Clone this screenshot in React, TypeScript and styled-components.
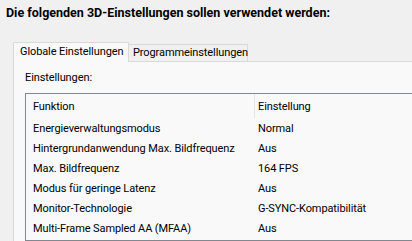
import React from "react";
import styled, { createGlobalStyle } from "styled-components";

const Global = createGlobalStyle`
  html, body { margin: 0; padding: 0; }
  body {
    background: #f0f0f0;
    font-family: Roboto, "Liberation Sans", sans-serif;
    font-size: 11px;
    letter-spacing: -0.1px;
    color: #000;
  }
`;

const Page = styled.div`
  width: 412px;
  height: 241px;
  overflow: hidden;
  background: #f0f0f0;
  display: flex;
  flex-direction: column;
`;

const Title = styled.div`
  padding: 5px 0 0 6px;
  font-weight: 700;
  font-size: 12.5px;
  letter-spacing: 0;
  line-height: 16px;
  white-space: nowrap;
`;

const TabArea = styled.div`
  margin: 21px 0 0 13px;
  display: flex;
  flex-direction: column;
  flex: 1;
  min-height: 0;
`;

const TabStrip = styled.div`
  display: flex;
  align-items: flex-end;
  height: 19px;
`;

const Tab = styled.div<{ $active?: boolean }>`
  box-sizing: border-box;
  position: relative;
  z-index: ${(p) => (p.$active ? 1 : 0)};
  height: ${(p) => (p.$active ? "20px" : "17px")};
  margin-bottom: ${(p) => (p.$active ? "-1px" : "0")};
  width: ${(p) => (p.$active ? "116px" : "119px")};
  padding-left: ${(p) => (p.$active ? "6px" : "4px")};
  background: ${(p) => (p.$active ? "#f9f9f9" : "#f0f0f0")};
  border: 1px solid #d9d9d9;
  border-bottom: none;
  border-left: ${(p) => (p.$active ? "1px solid #d9d9d9" : "none")};
  line-height: ${(p) => (p.$active ? "17px" : "16px")};
  white-space: nowrap;
`;

const Panel = styled.div`
  flex: 1;
  background: #f9f9f9;
  border-top: 1px solid #d9d9d9;
  border-left: 1px solid #d9d9d9;
  padding: 8px 0 0 11px;
  display: flex;
  flex-direction: column;
`;

const Label = styled.div`
  line-height: 16px;
`;

const List = styled.div`
  margin: 7px -20px 0 0;
  flex: 1;
  border: 1px solid #828790;
  background: #f9f9f9;
`;

const Row = styled.div<{ $header?: boolean }>`
  display: grid;
  grid-template-columns: 228px 1px 1fr;
  height: ${(p) => (p.$header ? "24px" : "20px")};
  align-items: center;
`;

const Cell = styled.div<{ $first?: boolean }>`
  padding-left: ${(p) => (p.$first ? "7px" : "3px")};
  white-space: nowrap;
`;

const Sep = styled.div<{ $show?: boolean }>`
  align-self: stretch;
  background: ${(p) => (p.$show ? "#e5e5e5" : "transparent")};
`;

const rows: [string, string][] = [
  ["Energieverwaltungsmodus", "Normal"],
  ["Hintergrundanwendung Max. Bildfrequenz", "Aus"],
  ["Max. Bildfrequenz", "164 FPS"],
  ["Modus für geringe Latenz", "Aus"],
  ["Monitor-Technologie", "G-SYNC-Kompatibilität"],
  ["Multi-Frame Sampled AA (MFAA)", "Aus"],
];

export default function App() {
  return (
    <Page>
      <Global />
      <Title>Die folgenden 3D-Einstellungen sollen verwendet werden:</Title>
      <TabArea>
        <TabStrip>
          <Tab $active>Globale Einstellungen</Tab>
          <Tab>Programmeinstellungen</Tab>
        </TabStrip>
        <Panel>
          <Label>Einstellungen:</Label>
          <List>
            <Row $header>
              <Cell $first>Funktion</Cell>
              <Sep $show />
              <Cell>Einstellung</Cell>
            </Row>
            {rows.map(([a, b]) => (
              <Row key={a}>
                <Cell $first>{a}</Cell>
                <Sep />
                <Cell>{b}</Cell>
              </Row>
            ))}
          </List>
        </Panel>
      </TabArea>
    </Page>
  );
}
